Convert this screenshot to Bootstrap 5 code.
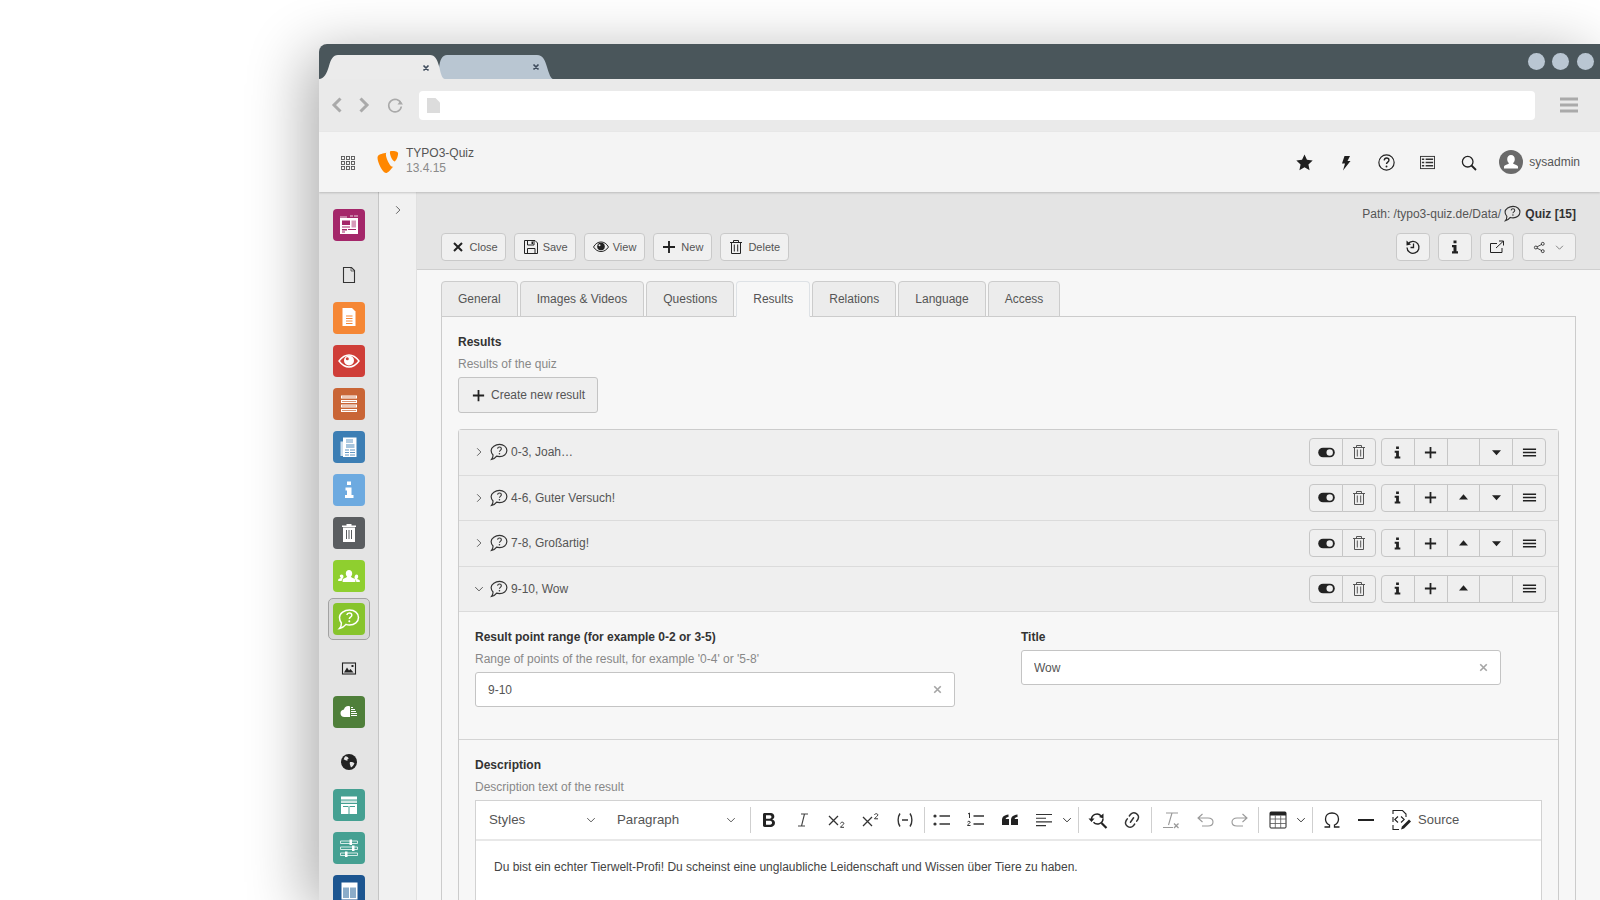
<!DOCTYPE html>
<html lang="en">
<head>
<meta charset="utf-8">
<title>TYPO3-Quiz</title>
<link href="https://cdn.jsdelivr.net/npm/bootstrap@5.3.0/dist/css/bootstrap.min.css" rel="stylesheet">
<style>
html,body{height:100%;overflow:hidden;background:#fff}
body{font-family:"Liberation Sans",Arial,sans-serif;font-size:12px;color:#444}
.bw{margin:44px 0 0 319px;height:856px;width:1281px;border-radius:8px 0 0 0;box-shadow:-12px 10px 60px rgba(0,0,0,.32);overflow:hidden;display:flex;flex-direction:column;background:#f7f7f7}
.bw-title{height:35px;background:#4a565b;flex:none;padding-right:6.5px}
.bw-dot{width:17px;height:17px;border-radius:50%;background:#b9c6d2;margin-top:9px}
.bw-tool{height:53px;background:#eaeaea;flex:none;padding-bottom:1px}
.bw-nav{width:100px;padding-left:9px}
.bw-url{width:1116px;height:29px;background:#fff;border-radius:4px;padding-left:8px}
.bw-burger{margin-left:25px}
.ty-head{height:60px;flex:none;background:#f4f4f4;box-shadow:0 1px 2px rgba(0,0,0,.18);position:relative;z-index:2;color:#555}
.ty-grid{width:57px;text-align:center;padding-left:0}
.ty-brand{line-height:15px;margin-left:6px;font-size:12px;margin-top:-2px}
.ty-brand span{display:block;color:#8a8a8a}
.ty-slot{width:41px;text-align:center;color:#222}
.ty-user{margin-left:10px;margin-right:20px;font-size:12px;color:#555}
.ty-user svg{margin-right:6px}
.ty-main{flex:1;min-height:0}
.mod-rail{width:60px;flex:none;background:#e4e4e4;border-right:1px solid #c5c5c5;padding:17px 0 0 14px;gap:11px}
.tile{width:32px;height:32px;border-radius:4px;flex:none;display:flex;align-items:center;justify-content:center}
.tile svg{width:24px;height:24px}
.tile-plain{margin-top:7px}
.tile-cur{position:relative}
.tile-cur::after{content:"";position:absolute;left:-5px;top:-5px;width:42px;height:42px;border:1px solid #a2a2a2;border-radius:5px;background:rgba(0,0,0,.05)}
.tile-cur svg{position:relative;z-index:1}
.tree-rail{width:38px;flex:none;background:#f1f1f1;border-right:1px solid #e0e0e0;padding-top:8px;text-align:center;color:#555}
.work{flex:1;min-width:0;overflow:hidden}
.doc-head{height:78px;background:#e4e4e4;border-bottom:1px solid #cfcfcf;padding:13px 24px 0 24px}
.doc-path{line-height:18px;color:#555;height:28px;font-size:12px}
.doc-path b{color:#333}
.dbtn{height:28px;padding:0 7.5px;font-size:11px;color:#555;background:#f0f0f0;border:1px solid #c9c9c9;border-radius:4px;display:inline-flex;align-items:center;gap:4px;--bs-btn-hover-bg:#f0f0f0}
.dbtn svg{color:#222}
.dbtn-sq{width:34px;justify-content:center;padding:0}
.doc-body{padding:11px 24px 0 24px}
.qtabs{border-bottom:0;gap:2px;margin-bottom:-1px;position:relative;z-index:1}
.qtabs .nav-link{height:36px;padding:0 16px;line-height:35px;font-size:12px;color:#555;background:#ececec;border:1px solid #ccc;border-bottom-color:#ccc;border-radius:4px 4px 0 0;margin:0}
.qtabs .nav-link.active{background:#f7f7f7;border-bottom-color:#f7f7f7;color:#555}
.qpanel{border:1px solid #ccc;padding:15px 16px 0 16px;background:#f7f7f7;height:600px}
.lbl{font-weight:700;color:#333;line-height:20px;font-size:12px}
.hlp{line-height:20px;color:#888;font-size:12px;margin-top:2px}
.addbtn{height:36px;width:140px;margin-top:3px;background:#efefef;border:1px solid #c4c4c4;border-radius:3px;color:#555;font-size:12px;display:flex;align-items:center;justify-content:center;gap:5px;padding:0}
.addbtn svg{color:#222}
.res-box{margin-top:16px;border:1px solid #ccc;border-radius:4px 4px 0 0;border-bottom:0;background:#f7f7f7;width:1101px;height:500px}
.res-row{height:45.5px;background:#efefef;border-bottom:1.5px solid #dbdbdb;padding:0 12px 0 14px;color:#555;font-size:12px}
.res-row .chev{margin-right:5px;color:#555}
.res-row .bub{margin-right:3px;color:#333}
.res-row .btn-group{height:28px}
.res-row .btn-group .btn{width:33.8px;padding:0;background:#efefef;border:1px solid #c6c6c6;display:flex;align-items:center;justify-content:center;color:#222;--bs-btn-border-radius:4px}
.rb-gap{margin-right:5px;margin-left:auto}
.res-form{padding:15px 16px 32px 16px;gap:66px;border-bottom:1px solid #d4d4d4}
.res-col{width:480px;flex:none}
.fld{position:relative;margin-top:3px}
.fld .form-control{height:35px;border:1px solid #c4c4c4;border-radius:3px;font-size:12px;color:#555;padding:0 12px;background:#fff;box-shadow:none}
.fld-x{position:absolute;right:11px;top:11px;color:#a5a5a5}
.fld-title{margin-top:3px}
.res-desc{padding:15px 16px 0 16px}
.rte{margin-top:3px;border:1px solid #d2d2d2;background:#fff;height:120px}
.rte-bar{height:40px;border-bottom:2px solid #e8e8e8;color:#333;font-size:13px;background:#fff}
.rte-sel{display:flex;align-items:center;justify-content:space-between;color:#555;font-size:13.3px}
.rte-s1{width:141px;padding:0 20px 0 13px}
.rte-s2{width:127px;padding:0 7px 0 0}
.rte-i{width:34px;height:30px;flex:none;display:flex;align-items:center;justify-content:center;color:#333}
.rte-dim{color:#999}
.rte-c{width:12px;flex:none;display:flex;align-items:center;justify-content:center;color:#333}
.rte-sep{width:1px;height:26px;background:#cfcfcf;margin:0 2px;flex:none}
.rte-sep-a{margin:0 1px 0 6px}
.rte-sep-b{margin:0 0 0 2px}
.rte-sep-c{margin:0 2px 0 5px}
.rte-src{margin-left:9px;color:#555;gap:6px;display:flex;align-items:center}
.rte-txt{padding:17px 18px;line-height:18px;font-size:12px;color:#444}
</style>
</head>
<body>
<svg width="0" height="0" class="d-none">
<defs>
<symbol id="i-x" viewBox="0 0 16 16"><path d="M4 4l8 8M12 4l-8 8" fill="none" stroke="currentColor" stroke-width="2"/></symbol>
<symbol id="i-plus" viewBox="0 0 16 16"><path d="M8 2v12M2 8h12" fill="none" stroke="currentColor" stroke-width="1.900"/></symbol>
<symbol id="i-save" viewBox="0 0 16 16"><path d="M1.500 1.500h10.500l2.500 2.500v10.500h-13zM4.500 1.500v4.500h6.500V1.500M4.500 14.500V9.500h7.500v5" fill="none" stroke="currentColor" stroke-width="1"/><path d="M8.500 2.500h1.500v2.500H8.500z" fill="currentColor"/></symbol>
<symbol id="i-eye" viewBox="0 0 16 16"><path d="M.5 8C2.500 4.500 5 3 8 3s5.500 1.500 7.500 5c-2 3-4.500 4.500-7.500 4.500S2.500 11 .5 8z" fill="none" stroke="currentColor"/><circle cx="8" cy="7.500" r="3.800" fill="currentColor"/><circle cx="6.500" cy="6.200" r="1" fill="#f0f0f0"/></symbol>
<symbol id="i-trash" viewBox="0 0 16 16"><path d="M3.500 3.500v11h9v-11M2 3.500h12M5.500 3.500V1.500h5v2M6.300 5.500v7M9.700 5.500v7" fill="none" stroke="currentColor" stroke-width="1"/></symbol>
<symbol id="i-hist" viewBox="0 0 16 16"><path d="M3 5A6 6 0 1 1 2 8.500" fill="none" stroke="currentColor" stroke-width="1.300"/><path d="M1.500 1.500L6 5.500 1.500 6.500z" fill="currentColor"/><path d="M8.500 4.500v4H5.500" fill="none" stroke="currentColor" stroke-width="1.300"/></symbol>
<symbol id="i-info" viewBox="0 0 16 16"><path d="M6.500 1.500h3v2.700h-3zM5 6h4.500v6.300H11V14.500H5v-2.200h1.500V8.200H5z" fill="currentColor"/></symbol>
<symbol id="i-ext" viewBox="0 0 16 16"><path d="M13 9v4.500H1.500v-9H8" fill="none" stroke="currentColor"/><path d="M7 9L14 2.500M10 2h4.500V6.500" fill="none" stroke="currentColor"/></symbol>
<symbol id="i-share" viewBox="0 0 16 16"><circle cx="3.500" cy="8" r="1.800" fill="none" stroke="currentColor"/><circle cx="12" cy="3.500" r="1.800" fill="none" stroke="currentColor"/><circle cx="12" cy="12.500" r="1.800" fill="none" stroke="currentColor"/><path d="M5 7.200L10.500 4.300M5 8.800L10.500 11.700" stroke="currentColor"/></symbol>
<symbol id="i-cd" viewBox="0 0 16 16"><path d="M3 5.500l5 5 5-5" fill="none" stroke="currentColor" stroke-width="1.300"/></symbol>
<symbol id="i-cr" viewBox="0 0 16 16"><path d="M5.500 3l5 5-5 5" fill="none" stroke="currentColor" stroke-width="1.200"/></symbol>
<symbol id="i-bub" viewBox="0 0 16 16"><path d="M8.500 1.300c3.500 0 6.500 2.200 6.500 5.400s-3 5.400-6.500 5.400c-.9 0-1.800-.1-2.600-.4-1 1.300-2.500 2.700-4.500 3 1-1 1.300-2.500 1.300-4C1.500 9.500 1 8.200 1 6.700c0-3.200 4-5.400 7.500-5.400z" fill="none" stroke="currentColor" stroke-width="1.050"/><path d="M6.700 5c.2-1 .9-1.400 1.700-1.400 1 0 1.700.6 1.700 1.500 0 1.400-1.700 1.400-1.700 2.700" fill="none" stroke="currentColor" stroke-width="1"/><circle cx="8.400" cy="9.500" r=".7" fill="currentColor"/></symbol>
<symbol id="i-tog" viewBox="0 0 16 10"><rect x=".2" y=".5" width="15.600" height="9" rx="4.500" fill="currentColor"/><circle cx="11" cy="5" r="3" fill="#efefef"/></symbol>
<symbol id="i-up" viewBox="0 0 16 16"><path d="M8 4.500l4.800 5.500h-9.600z" fill="currentColor"/></symbol>
<symbol id="i-dn" viewBox="0 0 16 16"><path d="M3.200 5.500h9.600L8 11z" fill="currentColor"/></symbol>
<symbol id="i-bars" viewBox="0 0 16 16"><path d="M1 4.500h14M1 8h14M1 11.500h14" fill="none" stroke="currentColor" stroke-width="1.500"/></symbol>
</defs>
</svg>

<div class="bw">
  <div class="bw-title d-flex">
    <svg width="240" height="35" viewBox="0 0 240 35" aria-hidden="true">
      <path d="M115 35c3 0 4-5 5-11 1-8 3-13 8-13h90c6 0 8 5 10 12 2 7 4 12 6 12z" fill="#b9c6d2"/>
      <path d="M0 35c5 0 8-6 10-13 2-7 4-11 9-11h92c5 0 7 4 9 11 2 8 3 13 6 13z" fill="#ebebeb"/>
      <path d="M104.500 21.500l5 5M109.500 21.500l-5 5M214.500 20.500l5 5M219.500 20.500l-5 5" stroke="#3e4b5c" stroke-width="1.700"/>
    </svg>
    <div class="ms-auto d-flex" style="gap:7.5px">
      <div class="bw-dot"></div><div class="bw-dot"></div><div class="bw-dot"></div>
    </div>
  </div>

  <div class="bw-tool d-flex align-items-center">
    <div class="bw-nav d-flex align-items-center">
      <svg width="18" height="18" viewBox="0 0 18 18"><path d="M12.500 2.500L6 9l6.500 6.500" fill="none" stroke="#aaa" stroke-width="3"/></svg>
      <svg width="18" height="18" viewBox="0 0 18 18" style="margin-left:9px"><path d="M5.500 2.500L12 9l-6.500 6.500" fill="none" stroke="#aaa" stroke-width="3"/></svg>
      <svg width="18" height="18" viewBox="0 0 18 18" style="margin-left:13px"><path d="M15 7.500A6.300 6.300 0 1 0 15.300 10.500" fill="none" stroke="#aaa" stroke-width="1.700"/><path d="M11.500 8.500h5.500l-2.700-3.700z" fill="#aaa"/></svg>
    </div>
    <div class="bw-url d-flex align-items-center">
      <svg width="13" height="15" viewBox="0 0 13 15"><path d="M0 0h8.500L13 4.500V15H0z" fill="#dcdcdc"/></svg>
    </div>
    <svg class="bw-burger" width="18" height="16" viewBox="0 0 18 16"><path d="M0 2h18M0 8h18M0 14h18" stroke="#aaa" stroke-width="3"/></svg>
  </div>

  <header class="ty-head d-flex align-items-center">
    <div class="ty-grid">
      <svg width="14" height="14" viewBox="0 0 14 14"><g fill="none" stroke="#555" stroke-width=".9"><rect x=".5" y=".5" width="3" height="3"/><rect x="5.500" y=".5" width="3" height="3"/><rect x="10.500" y=".5" width="3" height="3"/><rect x=".5" y="5.500" width="3" height="3"/><rect x="5.500" y="5.500" width="3" height="3"/><rect x="10.500" y="5.500" width="3" height="3"/><rect x=".5" y="10.500" width="3" height="3"/><rect x="5.500" y="10.500" width="3" height="3"/><rect x="10.500" y="10.500" width="3" height="3"/></g></svg>
    </div>
    <svg width="24" height="24" viewBox="0 0 24 24"><path fill="#ff8700" d="M17.300 16.500c-.4.1-.7.2-1 .2-2.600 0-6.400-9.100-6.400-12.100 0-1.100.3-1.500.6-1.800C7.300 3.200 3.200 4.400 2 5.900c-.3.400-.5 1-.5 1.900C1.500 12.400 6.500 23 10 23c1.600 0 4.400-2.700 7.300-6.500M15.700 1c3.200 0 6.400.5 6.400 2.300 0 3.700-2.300 8.100-3.500 8.100-2.100 0-4.700-5.900-4.700-8.800C13.900 1.300 14.400 1 15.700 1"/></svg>
    <div class="ty-brand">TYPO3-Quiz<span>13.4.15</span></div>
    <div class="ms-auto d-flex align-items-center">
      <div class="ty-slot"><svg width="17" height="17" viewBox="0 0 16 16"><path d="M8 .5l2.300 5 5.400.6-4 3.700 1.100 5.400L8 12.500l-4.800 2.700 1.100-5.400-4-3.700 5.400-.6z" fill="#1e1e1e"/></svg></div>
      <div class="ty-slot"><svg width="16" height="16" viewBox="0 0 16 16"><path d="M6.500 1H12L9.500 6H12.500L5 15.500 7 8.500H4z" fill="#1e1e1e"/></svg></div>
      <div class="ty-slot"><svg width="17" height="17" viewBox="0 0 16 16"><circle cx="8" cy="8" r="7.200" fill="none" stroke="#222" stroke-width="1.100"/><path d="M5.800 6c.2-1.500 1.200-2.200 2.300-2.200 1.300 0 2.200.8 2.200 2 0 1.900-2.300 1.800-2.300 3.700" fill="none" stroke="#222" stroke-width="1.300"/><circle cx="8" cy="11.800" r=".9" fill="#222"/></svg></div>
      <div class="ty-slot"><svg width="15" height="15" viewBox="0 0 16 16"><rect x=".5" y="1.500" width="15" height="13" fill="none" stroke="#333"/><path d="M2 4.500h2.500M6 4.500h8M2 8h2.500M6 8h8M2 11.500h2.500M6 11.500h8" stroke="#333" stroke-width="1.500"/></svg></div>
      <div class="ty-slot"><svg width="16" height="16" viewBox="0 0 16 16"><circle cx="6.700" cy="6.700" r="5.300" fill="none" stroke="#222" stroke-width="1.300"/><path d="M10.500 10.500L15 15" stroke="#222" stroke-width="1.800"/></svg></div>
      <div class="ty-user d-flex align-items-center">
        <svg width="24" height="24" viewBox="0 0 24 24"><circle cx="12" cy="12" r="12" fill="#6a6a6a"/><path d="M12 5c2.400 0 3.800 1.800 3.800 4.300 0 2-1 3.200-1.800 4 .2 1 3.900 1.400 5 3.200v2H5v-2c1.100-1.800 4.800-2.200 5-3.200-.8-.8-1.800-2-1.800-4C8.200 6.800 9.600 5 12 5z" fill="#fff"/></svg>sysadmin
      </div>
    </div>
  </header>

  <div class="ty-main d-flex">
    <nav class="mod-rail d-flex flex-column">
      <div class="tile" style="background:#a4276a"><svg viewBox="0 0 24 24"><path d="M3 3.500h7v1H3zM13 2.500h3v1h-3zM17 2.500h4v1h-4z" fill="#fff" opacity=".8"/><path d="M3 5h18v16H3z" fill="#fff"/><path d="M5 7.500h8v4.500H5z" fill="#a4276a"/><path d="M14.500 7.500h4.500v7h-4.500z" fill="#d79ab9"/><path d="M5 13.500h8v1H5zM5 16h5v1.500H5zM11 16h8v1h-8zM5 18.500h3v1H5z" fill="#a4276a"/></svg></div>
      <div class="tile tile-plain" style="color:#333"><svg viewBox="0 0 24 24"><path d="M6.500 4.500h8l3 3v12h-11z" fill="none" stroke="currentColor" stroke-width="1.100"/><path d="M14 4.500v3.500h3.500" fill="none" stroke="currentColor" stroke-width=".7"/></svg></div>
      <div class="tile" style="background:#f58735"><svg viewBox="0 0 24 24"><path d="M5.500 2H15l3.500 3.500V20h-13z" fill="#fff"/><path d="M9 10h6.500M9 12.500h6.500M9 15h6.500M9 17.500h6.500" stroke="#f58735"/></svg></div>
      <div class="tile" style="background:#cf3e38"><svg viewBox="0 0 24 24"><path d="M2 12c3-4 6-6 10-6s7 2 10 6c-3 4-6 6-10 6s-7-2-10-6z" fill="none" stroke="#fff" stroke-width="1.400"/><circle cx="12" cy="11.500" r="5" fill="#fff"/><circle cx="10.300" cy="9.800" r="1.500" fill="#cf3e38"/></svg></div>
      <div class="tile" style="background:#c96536"><svg viewBox="0 0 24 24"><path d="M4 3.500h16v3H4zM4 8h16v3H4zM4 12.500h16v3H4zM4 17h16v3H4z" fill="#fff"/><path d="M5 5h14M5 9.500h14M5 14h14M5 18.500h14" stroke="#c96536" stroke-width=".7"/></svg></div>
      <div class="tile" style="background:#3c7eb4"><svg viewBox="0 0 24 24"><path d="M3.500 6.500H6V21H3.500z" fill="#cfe0ee"/><path d="M6 2.500h13.500V22H6z" fill="#fff"/><path d="M9 5h7M9 7h7" stroke="#3c7eb4" stroke-width=".8"/><path d="M9 9h8.500v4H9z" fill="#a6c5de"/><path d="M8 15h4M13 15h5M8 17.500h4M13 17.500h5M8 20h4M13 20h5" stroke="#3c7eb4" stroke-width=".8"/></svg></div>
      <div class="tile" style="background:#6daae0"><svg viewBox="0 0 24 24"><path d="M10 3.500h4v3.500h-4zM8.500 9.500h6v7.500h2V20h-8.500v-3h2v-4.500h-1.500z" fill="#fff"/></svg></div>
      <div class="tile" style="background:#5a5d60"><svg viewBox="0 0 24 24"><path d="M6 6.500h12V21H6z" fill="#fff"/><path d="M5 4.500h14V6H5zM9.500 3h5v1.500h-5z" fill="#fff"/><path d="M9.500 9v9M12 9v9M14.500 9v9" stroke="#5a5d60"/></svg></div>
      <div class="tile" style="background:#8fcf2f"><svg viewBox="0 0 24 24"><path d="M12 6c1.900 0 3.200 1.500 3.200 3.500 0 1.500-.8 2.500-1.400 3.300.2.900 3.200 1.200 4.600 2.700V18H5.600v-2.500c1.400-1.500 4.400-1.800 4.600-2.700-.6-.8-1.400-1.800-1.400-3.300C8.800 7.500 10.100 6 12 6zM4.500 10.500c1.200 0 2 .9 2 2.100 0 .9-.5 1.500-.9 2-.5.6-.9 1.400-.9 2.400H1.200v-1.600c.8-.8 2.400-1 2.600-1.600-.4-.5-1-1.100-1-2C2.800 11.400 3.400 10.500 4.500 10.500zM19.500 10.500c1.100 0 1.700.9 1.700 2.300 0 .9-.6 1.500-1 2 .2.600 1.800.8 2.600 1.600V18h-3.500c0-1-.4-1.800-.9-2.400-.4-.5-.9-1.100-.9-2 0-1.200.8-3.100 2-3.100z" fill="#fff"/></svg></div>
      <div class="tile tile-cur" style="background:#8fcf2f"><svg viewBox="0 0 24 24"><path d="M12.500 3c5 0 9 3 9 7.500S17.500 18 12.500 18c-1.200 0-2.400-.2-3.500-.6-1.500 1.900-3.600 3.500-6.500 4 1.400-1.500 2-3.500 1.900-5.500-1.200-1.400-1.900-3-1.900-5.400C2.500 6 7.500 3 12.500 3z" fill="none" stroke="#fff" stroke-width="1.500"/><path d="M9.800 8c.3-1.400 1.300-2 2.500-2 1.400 0 2.500.9 2.500 2.200 0 2-2.500 2-2.500 3.800" fill="none" stroke="#fff" stroke-width="1.500"/><circle cx="12.300" cy="14.300" r="1" fill="#fff"/></svg></div>
      <div class="tile tile-plain" style="color:#222"><svg viewBox="0 0 24 24"><rect x="5.500" y="6" width="13" height="11" fill="none" stroke="currentColor" stroke-width="1.100"/><path d="M7 15.500l3-5 2 3 1.500-1.500 3 3.500z" fill="currentColor"/><path d="M14.500 8h2v2h-2z" fill="currentColor"/></svg></div>
      <div class="tile" style="background:#4f7f3a"><svg viewBox="0 0 24 24"><path d="M13 6.500c-2.800-1.200-5.500.5-6 3-2.200.2-3.500 1.700-3.500 3.700 0 2 1.500 3.800 3.800 3.800H13z" fill="#fff"/><path d="M14 7.500h2M14 9.500h4M14 11.500h5M14 13.500h6M14 15.500h6" stroke="#fff"/></svg></div>
      <div class="tile tile-plain" style="color:#222"><svg viewBox="0 0 24 24"><circle cx="12" cy="12" r="8" fill="#222"/><path d="M8.300 6.200c2 0 2.800 1.500 3.500 2.300-1 .3-1.700 1-1.300 2.200-1 .2-2.500-.8-3.800-1.200.2-1.200.8-2.300 1.600-3.300zM13 12c1.600-.2 3.600.3 4.400 1.300-.4 1.900-2 3.500-3.400 4.200-.6-1.800-1.800-3.700-1-5.500z" fill="#e4e4e4"/></svg></div>
      <div class="tile" style="background:#45a092"><svg viewBox="0 0 24 24"><path d="M4 3.500h16v3H4z" fill="#fff"/><path d="M4 7.500h16v2.500H4z" fill="#cfe6e2"/><path d="M4 11h16v10H4z" fill="#fff"/><path d="M11.500 13v8h1v-8zM6 13h12v1H6z" fill="#45a092"/></svg></div>
      <div class="tile" style="background:#45a092"><svg viewBox="0 0 24 24"><path d="M3.500 5h17v2.500h-17zM3.500 11h17v2.500h-17zM3.500 17h17v2.500h-17z" fill="none" stroke="#e5f3f0" stroke-width=".9"/><path d="M12.500 3.500h2.500v5.500h-2.500zM15 9.500h2.500v5.500H15zM8 15.500h2.500v5.500H8z" fill="#fff"/></svg></div>
      <div class="tile" style="background:#1c5590"><svg viewBox="0 0 24 24"><rect x="4.500" y="3.500" width="16" height="17" fill="#fff"/><path d="M6 8.500h6v10.500H6z" fill="#8bacc9"/><path d="M13 8.500h6v10.500h-6z" fill="#8bacc9"/></svg></div>
    </nav>

    <aside class="tree-rail"><svg width="12" height="12"><use href="#i-cr"/></svg></aside>

    <main class="work">
      <div class="doc-head">
        <div class="doc-path d-flex justify-content-end align-items-start">Path: /typo3-quiz.de/Data/&nbsp;<svg width="17" height="17" class="me-1" style="color:#333"><use href="#i-bub"/></svg><b>Quiz [15]</b></div>
        <div class="d-flex">
          <div class="d-flex gap-2">
            <button class="btn dbtn" type="button"><svg width="16" height="16"><use href="#i-x"/></svg>Close</button>
            <button class="btn dbtn" type="button"><svg width="16" height="16"><use href="#i-save"/></svg>Save</button>
            <button class="btn dbtn" type="button"><svg width="16" height="16"><use href="#i-eye"/></svg>View</button>
            <button class="btn dbtn" type="button"><svg width="16" height="16"><use href="#i-plus"/></svg>New</button>
            <button class="btn dbtn" type="button"><svg width="16" height="16"><use href="#i-trash"/></svg>Delete</button>
          </div>
          <div class="d-flex gap-2 ms-auto">
            <button class="btn dbtn dbtn-sq" type="button" aria-label="History"><svg width="16" height="16"><use href="#i-hist"/></svg></button>
            <button class="btn dbtn dbtn-sq" type="button" aria-label="Info"><svg width="16" height="16"><use href="#i-info"/></svg></button>
            <button class="btn dbtn dbtn-sq" type="button" aria-label="Open"><svg width="16" height="16"><use href="#i-ext"/></svg></button>
            <button class="btn dbtn dbtn-sq" style="width:54px" type="button" aria-label="Share"><svg width="13" height="13"><use href="#i-share"/></svg><svg width="11" height="11" style="color:#777;margin-left:4px"><use href="#i-cd"/></svg></button>
          </div>
        </div>
      </div>

      <div class="doc-body">
        <ul class="nav nav-tabs qtabs">
          <li class="nav-item"><a class="nav-link" href="#">General</a></li>
          <li class="nav-item"><a class="nav-link" href="#">Images &amp; Videos</a></li>
          <li class="nav-item"><a class="nav-link" href="#">Questions</a></li>
          <li class="nav-item"><a class="nav-link active" href="#">Results</a></li>
          <li class="nav-item"><a class="nav-link" href="#">Relations</a></li>
          <li class="nav-item"><a class="nav-link" href="#">Language</a></li>
          <li class="nav-item"><a class="nav-link" href="#">Access</a></li>
        </ul>
        <div class="qpanel">
          <div class="lbl">Results</div>
          <div class="hlp">Results of the quiz</div>
          <button class="btn addbtn" type="button"><svg width="15" height="15"><use href="#i-plus"/></svg>Create new result</button>

          <div class="res-box">
            <div class="res-row d-flex align-items-center">
              <svg class="chev" width="12" height="12"><use href="#i-cr"/></svg><svg class="bub" width="18" height="18"><use href="#i-bub"/></svg>0-3, Joah…
              <div class="btn-group rb-gap"><button class="btn" type="button" aria-label="Hide"><svg width="17" height="11"><use href="#i-tog"/></svg></button><button class="btn" type="button" aria-label="Delete"><svg width="16" height="16" style="color:#555"><use href="#i-trash"/></svg></button></div>
              <div class="btn-group"><button class="btn" type="button" aria-label="Info"><svg width="15" height="15"><use href="#i-info"/></svg></button><button class="btn" type="button" aria-label="Add"><svg width="15" height="15"><use href="#i-plus"/></svg></button><button class="btn" type="button" aria-label="Up"></button><button class="btn" type="button" aria-label="Down"><svg width="15" height="15"><use href="#i-dn"/></svg></button><button class="btn" type="button" aria-label="Sort"><svg width="15" height="15"><use href="#i-bars"/></svg></button></div>
            </div>
            <div class="res-row d-flex align-items-center">
              <svg class="chev" width="12" height="12"><use href="#i-cr"/></svg><svg class="bub" width="18" height="18"><use href="#i-bub"/></svg>4-6, Guter Versuch!
              <div class="btn-group rb-gap"><button class="btn" type="button" aria-label="Hide"><svg width="17" height="11"><use href="#i-tog"/></svg></button><button class="btn" type="button" aria-label="Delete"><svg width="16" height="16" style="color:#555"><use href="#i-trash"/></svg></button></div>
              <div class="btn-group"><button class="btn" type="button" aria-label="Info"><svg width="15" height="15"><use href="#i-info"/></svg></button><button class="btn" type="button" aria-label="Add"><svg width="15" height="15"><use href="#i-plus"/></svg></button><button class="btn" type="button" aria-label="Up"><svg width="15" height="15"><use href="#i-up"/></svg></button><button class="btn" type="button" aria-label="Down"><svg width="15" height="15"><use href="#i-dn"/></svg></button><button class="btn" type="button" aria-label="Sort"><svg width="15" height="15"><use href="#i-bars"/></svg></button></div>
            </div>
            <div class="res-row d-flex align-items-center">
              <svg class="chev" width="12" height="12"><use href="#i-cr"/></svg><svg class="bub" width="18" height="18"><use href="#i-bub"/></svg>7-8, Großartig!
              <div class="btn-group rb-gap"><button class="btn" type="button" aria-label="Hide"><svg width="17" height="11"><use href="#i-tog"/></svg></button><button class="btn" type="button" aria-label="Delete"><svg width="16" height="16" style="color:#555"><use href="#i-trash"/></svg></button></div>
              <div class="btn-group"><button class="btn" type="button" aria-label="Info"><svg width="15" height="15"><use href="#i-info"/></svg></button><button class="btn" type="button" aria-label="Add"><svg width="15" height="15"><use href="#i-plus"/></svg></button><button class="btn" type="button" aria-label="Up"><svg width="15" height="15"><use href="#i-up"/></svg></button><button class="btn" type="button" aria-label="Down"><svg width="15" height="15"><use href="#i-dn"/></svg></button><button class="btn" type="button" aria-label="Sort"><svg width="15" height="15"><use href="#i-bars"/></svg></button></div>
            </div>
            <div class="res-row d-flex align-items-center">
              <svg class="chev" width="12" height="12"><use href="#i-cd"/></svg><svg class="bub" width="18" height="18"><use href="#i-bub"/></svg>9-10, Wow
              <div class="btn-group rb-gap"><button class="btn" type="button" aria-label="Hide"><svg width="17" height="11"><use href="#i-tog"/></svg></button><button class="btn" type="button" aria-label="Delete"><svg width="16" height="16" style="color:#555"><use href="#i-trash"/></svg></button></div>
              <div class="btn-group"><button class="btn" type="button" aria-label="Info"><svg width="15" height="15"><use href="#i-info"/></svg></button><button class="btn" type="button" aria-label="Add"><svg width="15" height="15"><use href="#i-plus"/></svg></button><button class="btn" type="button" aria-label="Up"><svg width="15" height="15"><use href="#i-up"/></svg></button><button class="btn" type="button" aria-label="Down"></button><button class="btn" type="button" aria-label="Sort"><svg width="15" height="15"><use href="#i-bars"/></svg></button></div>
            </div>

            <div class="res-form d-flex">
              <div class="res-col">
                <div class="lbl">Result point range (for example 0-2 or 3-5)</div>
                <div class="hlp">Range of points of the result, for example '0-4' or '5-8'</div>
                <div class="fld"><input class="form-control" type="text" value="9-10" aria-label="Result point range"><svg class="fld-x" width="13" height="13"><use href="#i-x"/></svg></div>
              </div>
              <div class="res-col">
                <div class="lbl">Title</div>
                <div class="fld fld-title"><input class="form-control" type="text" value="Wow" aria-label="Title"><svg class="fld-x" width="13" height="13"><use href="#i-x"/></svg></div>
              </div>
            </div>

            <div class="res-desc">
              <div class="lbl">Description</div>
              <div class="hlp">Description text of the result</div>
              <div class="rte">
                <div class="rte-bar d-flex align-items-center">
                  <div class="rte-sel rte-s1">Styles<svg width="12" height="12"><use href="#i-cd"/></svg></div>
                  <div class="rte-sel rte-s2">Paragraph<svg width="12" height="12"><use href="#i-cd"/></svg></div>
                  <div class="rte-sep rte-sep-a"></div>
                  <div class="rte-i"><svg width="20" height="20" viewBox="0 0 20 20"><path fill-rule="evenodd" fill="#222" d="M10.187 17H5.773c-.637 0-1.092-.138-1.364-.415-.273-.277-.409-.718-.409-1.323V4.738c0-.617.14-1.062.419-1.332.279-.27.73-.406 1.354-.406h4.680c.69 0 1.288.041 1.793.124.506.083.96.242 1.36.478.341.197.644.447.906.75a3.262 3.262 0 0 1 .808 2.162c0 1.401-.722 2.426-2.167 3.075C15.050 10.175 16 11.315 16 13.010a3.756 3.756 0 0 1-2.296 3.504 6.100 6.100 0 0 1-1.517.377c-.571.073-1.238.11-2 .11zm-.217-6.217H7v4.087h3.069c1.977 0 2.965-.69 2.965-2.072 0-.707-.256-1.220-.768-1.537-.512-.319-1.277-.478-2.296-.478zM7 5.130v3.619h2.606c.729 0 1.292-.067 1.690-.2a1.600 1.600 0 0 0 .91-.765c.165-.267.247-.566.247-.897 0-.707-.26-1.176-.778-1.409-.519-.232-1.310-.348-2.375-.348H7z"/></svg></div>
                  <div class="rte-i"><svg width="16" height="16" viewBox="0 0 16 16"><path d="M6 2h7M3 14h7M9.500 2L6.500 14" fill="none" stroke="#444" stroke-width="1.100"/></svg></div>
                  <div class="rte-i"><svg width="20" height="18" viewBox="0 0 20 18"><path d="M2 5l9 9M11 5l-9 9" stroke="#333" stroke-width="1.300"/><path d="M13.500 12.500c.3-1 1-1.300 1.700-1.300 1 0 1.600.5 1.600 1.300 0 1.300-2.500 2-3.300 3.800H17" fill="none" stroke="#333" stroke-width="1"/></svg></div>
                  <div class="rte-i"><svg width="20" height="18" viewBox="0 0 20 18"><path d="M2 6l9 9M11 6l-9 9" stroke="#333" stroke-width="1.300"/><path d="M13.500 4c.3-1 1-1.300 1.700-1.300 1 0 1.600.5 1.600 1.300 0 1.300-2.500 2-3.300 3.800H17" fill="none" stroke="#333" stroke-width="1"/></svg></div>
                  <div class="rte-i"><svg width="20" height="18" viewBox="0 0 20 18"><path d="M5 2.500C2.500 6 2.500 12 5 15.500M15 2.500C17.500 6 17.500 12 15 15.500M7 9h6" fill="none" stroke="#333" stroke-width="1.400"/></svg></div>
                  <div class="rte-sep rte-sep-b"></div>
                  <div class="rte-i"><svg width="20" height="18" viewBox="0 0 20 18"><circle cx="3" cy="5" r="1.600" fill="#333"/><circle cx="3" cy="13" r="1.600" fill="#333"/><path d="M7.500 5H18M7.500 13H18" stroke="#333" stroke-width="1.300"/></svg></div>
                  <div class="rte-i"><svg width="20" height="18" viewBox="0 0 20 18"><path d="M2 3l1.500-1v5M1.500 11c.5-1 2.700-1 2.700.3 0 1-2.700 1.700-2.700 3.200h3" fill="none" stroke="#333"/><path d="M7.500 5H18M7.500 13H18" stroke="#333" stroke-width="1.300"/></svg></div>
                  <div class="rte-i"><svg width="18" height="16" viewBox="0 0 18 16"><path d="M1 13V8C1 5 3 3 7.500 2.500V5C5.500 5.400 4.800 6 4.700 7H8v6zM10 13V8c0-3 2-5 6.500-5.500V5c-2 .4-2.700 1-2.800 2H17v6z" fill="#222"/></svg></div>
                  <div class="rte-i"><svg width="18" height="16" viewBox="0 0 18 16"><path d="M1 2.500h16M1 6.200h10M1 9.900h16M1 13.600h10" stroke="#333" stroke-width="1.100"/></svg></div>
                  <div class="rte-c"><svg width="12" height="12"><use href="#i-cd"/></svg></div>
                  <div class="rte-sep rte-sep-c"></div>
                  <div class="rte-i"><svg width="20" height="20" viewBox="0 0 20 20"><path d="M3.500 9.500a5.500 5.500 0 0 1 9.500-3.800M15 8.500a5.500 5.500 0 0 1-9.500 3.800" fill="none" stroke="#222" stroke-width="1.500"/><path d="M13.500 13l5 5" stroke="#222" stroke-width="2.200"/><path d="M.5 8.500h6l-3 3.500zM11 7l4.500-3.500V8.500z" fill="#222"/></svg></div>
                  <div class="rte-i"><svg width="20" height="20" viewBox="0 0 20 20"><path fill="#333" d="M11.077 15l.991-1.416a.75.75 0 1 1 1.229.860l-1.148 1.640a.748.748 0 0 1-.217.206 5.251 5.251 0 0 1-8.503-5.955.741.741 0 0 1 .12-.274l1.147-1.639a.75.75 0 1 1 1.228.860L4.933 10.700l.006.003a3.750 3.750 0 0 0 6.132 4.294l.006.004zm5.494-5.335a.748.748 0 0 1-.12.274l-1.147 1.639a.75.75 0 1 1-1.228-.860l.860-1.230a3.750 3.750 0 0 0-6.144-4.301l-.860 1.229a.75.75 0 0 1-1.229-.860l1.148-1.640a.748.748 0 0 1 .217-.206 5.251 5.251 0 0 1 8.503 5.955zm-4.563-2.532a.75.75 0 0 1 .184 1.045l-3.155 4.505a.75.75 0 1 1-1.229-.860l3.155-4.506a.75.75 0 0 1 1.045-.184z"/></svg></div>
                  <div class="rte-sep"></div>
                  <div class="rte-i rte-dim"><svg width="20" height="20" viewBox="0 0 20 20"><path d="M5 3h12M11 3L7.500 15M2 17.500h10" fill="none" stroke="currentColor" stroke-width="1.100"/><path d="M13 13.500l4.500 4.500M17.500 13.500L13 18" stroke="currentColor" stroke-width="1.300"/></svg></div>
                  <div class="rte-i rte-dim"><svg width="17" height="14" viewBox="0 0 17 14"><path d="M5.500 1L1 5l4.500 4M1 5h10c3 0 5 1.500 5 4s-2 4-5 4H5" fill="none" stroke="currentColor" stroke-width="1.100"/></svg></div>
                  <div class="rte-i rte-dim"><svg width="17" height="14" viewBox="0 0 17 14"><path d="M11.500 1L16 5l-4.500 4M16 5H6C3 5 1 6.500 1 9s2 4 5 4h6" fill="none" stroke="currentColor" stroke-width="1.100"/></svg></div>
                  <div class="rte-sep"></div>
                  <div class="rte-i"><svg width="18" height="18" viewBox="0 0 18 18"><rect x="1" y="1" width="16" height="16" rx="1" fill="#fff" stroke="#222" stroke-width="1"/><rect x="1" y="1" width="16" height="3.500" fill="#222"/><path d="M1 8h16M1 12.500h16M6.300 4.500v12.500M11.700 4.500v12.500" stroke="#555" stroke-width=".8"/></svg></div>
                  <div class="rte-c"><svg width="12" height="12"><use href="#i-cd"/></svg></div>
                  <div class="rte-sep rte-sep-c"></div>
                  <div class="rte-i"><svg width="18" height="18" viewBox="0 0 18 18"><path d="M1.500 16h5v-2c-2.500-1-4-3-4-6 0-3.800 2.800-6 6.500-6s6.500 2.200 6.500 6c0 3-1.500 5-4 6v2h5" fill="none" stroke="#222" stroke-width="1.300"/></svg></div>
                  <div class="rte-i"><svg width="18" height="4" viewBox="0 0 18 4"><path d="M1 2h16" stroke="#222" stroke-width="2"/></svg></div>
                  <div class="rte-src"><svg width="20" height="22" viewBox="0 0 20 22"><path d="M1 5V1.500h9.500L14 5v3M1 16v4.500h6M1 8v5" fill="none" stroke="#222" stroke-width="1.100"/><path d="M6 7.500L2.800 10.500 6 13.500M9 7.500l3.200 3L9 13.500" fill="none" stroke="#222" stroke-width="1.100"/><path d="M9 20.500l1-3 7-7 2 2-7 7z" fill="#222"/></svg>Source</div>
                </div>
                <div class="rte-txt">Du bist ein echter Tierwelt-Profi! Du scheinst eine unglaubliche Leidenschaft und Wissen über Tiere zu haben.</div>
              </div>
            </div>
          </div>
        </div>
      </div>
    </main>
  </div>
</div>
<script src="https://cdn.jsdelivr.net/npm/bootstrap@5.3.0/dist/js/bootstrap.bundle.min.js"></script>
</body>
</html>
